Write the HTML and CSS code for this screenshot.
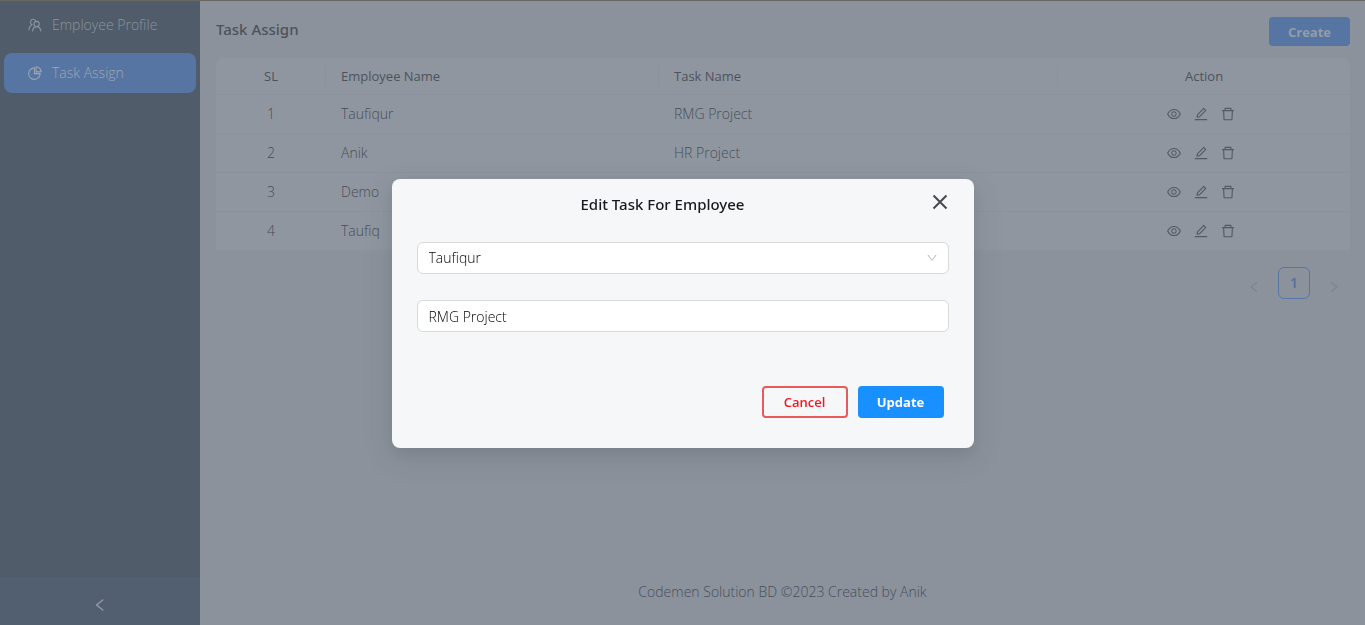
FILE: index.html
```html
<!DOCTYPE html>
<html lang="en">
<head>
<meta charset="utf-8">
<title>Task Assign</title>
<link rel="stylesheet" href="styles.css">
</head>
<body>
<svg class="defs" aria-hidden="true">
  <symbol id="eye" viewBox="0 0 1024 1024"><path d="M942.2 486.2C847.4 286.5 704.1 186 512 186c-192.2 0-335.4 100.5-430.2 300.3a60.3 60.3 0 000 51.5C176.6 737.5 319.9 838 512 838c192.2 0 335.4-100.5 430.2-300.3 7.7-16.2 7.7-35 0-51.5zM512 766c-161.3 0-279.4-81.8-362.7-254C232.6 339.8 350.7 258 512 258c161.3 0 279.4 81.8 362.7 254C791.5 684.2 673.4 766 512 766zm-4-430c-97.2 0-176 78.8-176 176s78.8 176 176 176 176-78.8 176-176-78.8-176-176-176zm0 288c-61.9 0-112-50.1-112-112s50.1-112 112-112 112 50.1 112 112-50.1 112-112 112z"/></symbol>
  <symbol id="edit" viewBox="0 0 1024 1024"><path d="M257.7 752c2 0 4-.2 6-.5L431.9 722c2-.4 3.9-1.3 5.3-2.8l423.9-423.9a9.96 9.96 0 000-14.1L694.9 114.9c-1.9-1.9-4.4-2.9-7.1-2.9s-5.2 1-7.1 2.9L256.8 538.8c-1.5 1.5-2.4 3.3-2.8 5.3l-29.5 168.2a33.5 33.5 0 009.4 29.8c6.6 6.4 14.9 9.9 23.8 9.9zm67.4-174.4L687.8 215l73.3 73.3-362.7 362.6-88.9 15.7 15.6-89zM880 836H144c-17.7 0-32 14.3-32 32v36c0 4.4 3.6 8 8 8h784c4.4 0 8-3.6 8-8v-36c0-17.7-14.3-32-32-32z"/></symbol>
  <symbol id="trash" viewBox="0 0 1024 1024"><path d="M360 184h-8c4.4 0 8-3.6 8-8v8h304v-8c0 4.4 3.6 8 8 8h-8v72h72v-80c0-35.3-28.7-64-64-64H352c-35.3 0-64 28.7-64 64v80h72v-72zm504 72H160c-17.7 0-32 14.3-32 32v32c0 4.4 3.6 8 8 8h60.4l24.7 523c1.6 34.1 29.8 61 63.9 61h454c34.2 0 62.3-26.8 63.9-61l24.7-523H888c4.4 0 8-3.6 8-8v-32c0-17.7-14.3-32-32-32zM731.3 840H292.7l-24.2-512h487l-24.2 512z"/></symbol>
  <symbol id="left" viewBox="0 0 1024 1024"><path d="M724 218.3V141c0-6.7-7.7-10.4-12.9-6.3L260.3 486.8a31.86 31.86 0 000 50.3l450.8 352.1c5.3 4.1 12.9.4 12.9-6.3v-77.3c0-4.9-2.3-9.6-6.1-12.6l-360-281 360-281.1c3.8-3 6.1-7.7 6.1-12.6z"/></symbol>
  <symbol id="right" viewBox="0 0 1024 1024"><path d="M765.7 486.8L314.9 134.7A7.97 7.97 0 00302 141v77.3c0 4.9 2.3 9.6 6.1 12.6l360 281.1-360 281.1c-3.9 3-6.1 7.7-6.1 12.6V883c0 6.7 7.7 10.4 12.9 6.3l450.8-352.1a31.96 31.96 0 000-50.4z"/></symbol>
  <symbol id="down" viewBox="0 0 1024 1024"><path d="M884 256h-75c-5.1 0-9.9 2.5-12.9 6.6L512 654.2 227.9 262.6c-3-4.1-7.8-6.6-12.9-6.6h-75c-6.5 0-10.3 7.4-6.5 12.7l352.6 486.1c12.8 17.6 39 17.6 51.7 0l352.6-486.1c3.9-5.3.1-12.7-6.4-12.7z"/></symbol>
  <symbol id="pie" viewBox="0 0 1024 1024"><path d="M864 518H506V160c0-4.4-3.6-8-8-8h-26a398.46 398.46 0 00-282.8 117.1 398.19 398.19 0 00-85.7 127.1A397.61 397.61 0 0072 552a398.46 398.46 0 00117.1 282.8c36.7 36.7 79.5 65.6 127.1 85.7A397.61 397.61 0 00472 952a398.46 398.46 0 00282.8-117.1c36.7-36.7 65.6-79.5 85.7-127.1A397.61 397.61 0 00872 552v-26c0-4.4-3.6-8-8-8zM705.7 787.8A331.59 331.59 0 01470.4 884c-88.1-.4-170.9-34.9-233.2-97.2C174.5 724.1 140 640.7 140 552c0-88.7 34.5-172.1 97.2-234.8 54.6-54.6 124.9-87.9 200.8-95.5V586h364.3c-7.7 76.3-41.3 147-96.6 201.8zM952 462.4l-2.6-28.2c-8.5-92.1-49.4-179-115.2-244.6A399.4 399.4 0 00589 74.6L560.7 72c-4.7-.4-8.7 3.2-8.7 7.9V464c0 4.4 3.6 8 8 8l384-1c4.7 0 8.4-4 8-8.6zm-332.2-58.2V147.6a332.24 332.24 0 01166.4 89.8c45.7 45.6 77 103.6 90 166.1l-256.4.7z"/></symbol>
  <symbol id="people" viewBox="0 0 16 16"><g fill="none" stroke="currentColor" stroke-width="1.1" stroke-linecap="round"><path d="M5.100 7.800A2.900 2.900 0 1 1 8.700 3.500M2 13c0-2.600 1.200-4.300 3.100-5.200"/><circle cx="9.600" cy="7" r="2.600"/><path d="M5.600 14c.2-2.500 1.800-4.400 4-4.400s3.900 1.900 4.200 4.400"/></g></symbol>
</svg>

<div class="app">
  <aside class="sidebar">
    <nav class="menu">
      <a class="menu-item" href="#profile"><svg class="icon"><use href="#people"/></svg>Employee Profile</a>
      <a class="menu-item selected" href="#tasks"><svg class="icon"><use href="#pie"/></svg>Task Assign</a>
    </nav>
    <button class="collapse" type="button" aria-label="Collapse menu"><svg class="icon"><use href="#left"/></svg></button>
  </aside>

  <div class="page">
    <main>
      <header class="page-head">
        <h1>Task Assign</h1>
        <button class="create" type="button">Create</button>
      </header>
      <table class="tasks">
        <colgroup><col class="col-sl"><col class="col-name"><col class="col-task"><col class="col-action"></colgroup>
        <thead>
          <tr><th class="center">SL</th><th>Employee Name</th><th>Task Name</th><th class="center">Action</th></tr>
        </thead>
        <tbody>
          <tr><td class="center">1</td><td>Taufiqur</td><td>RMG Project</td><td><div class="actions"><button type="button" aria-label="View"><svg class="icon"><use href="#eye"/></svg></button><button type="button" aria-label="Edit"><svg class="icon"><use href="#edit"/></svg></button><button type="button" aria-label="Delete"><svg class="icon"><use href="#trash"/></svg></button></div></td></tr>
          <tr><td class="center">2</td><td>Anik</td><td>HR Project</td><td><div class="actions"><button type="button" aria-label="View"><svg class="icon"><use href="#eye"/></svg></button><button type="button" aria-label="Edit"><svg class="icon"><use href="#edit"/></svg></button><button type="button" aria-label="Delete"><svg class="icon"><use href="#trash"/></svg></button></div></td></tr>
          <tr><td class="center">3</td><td>Demo</td><td></td><td><div class="actions"><button type="button" aria-label="View"><svg class="icon"><use href="#eye"/></svg></button><button type="button" aria-label="Edit"><svg class="icon"><use href="#edit"/></svg></button><button type="button" aria-label="Delete"><svg class="icon"><use href="#trash"/></svg></button></div></td></tr>
          <tr><td class="center">4</td><td>Taufiq</td><td></td><td><div class="actions"><button type="button" aria-label="View"><svg class="icon"><use href="#eye"/></svg></button><button type="button" aria-label="Edit"><svg class="icon"><use href="#edit"/></svg></button><button type="button" aria-label="Delete"><svg class="icon"><use href="#trash"/></svg></button></div></td></tr>
        </tbody>
      </table>
      <nav class="pagination" aria-label="Pages">
        <button class="page-arrow" type="button" aria-label="Previous page" disabled><svg class="icon"><use href="#left"/></svg></button>
        <a class="page-number" href="#page-1">1</a>
        <button class="page-arrow" type="button" aria-label="Next page" disabled><svg class="icon"><use href="#right"/></svg></button>
      </nav>
    </main>
    <footer>Codemen Solution BD ©2023 Created by Anik</footer>
  </div>
</div>

<div class="overlay">
  <form class="modal" role="dialog" aria-labelledby="modal-title">
    <h2 id="modal-title">Edit Task For Employee</h2>
    <button class="close" type="button" aria-label="Close"><svg viewBox="0 0 16 16"><path d="M1.500 1.500l13 13M14.500 1.500l-13 13"/></svg></button>
    <div class="field">
      <select aria-label="Employee"><option>Taufiqur</option><option>Anik</option><option>Demo</option><option>Taufiq</option></select>
      <svg class="chevron"><use href="#down"/></svg>
    </div>
    <div class="field"><input type="text" aria-label="Task name" value="RMG Project"></div>
    <div class="modal-actions">
      <button class="cancel" type="button">Cancel</button>
      <button class="update" type="submit">Update</button>
    </div>
  </form>
</div>
</body>
</html>
```
FILE: styles.css
```css
* { box-sizing: border-box; }

body {
  margin: 0;
  font-family: "Open Sans", "Noto Sans", sans-serif;
  font-size: 14px;
  font-weight: 300;
  line-height: 22px;
  color: #474e5a;
  background: #8b929c;
}

button, input, select { font: inherit; margin: 0; }
button { padding: 0; border: 0; background: none; color: inherit; cursor: pointer; }
a { color: inherit; text-decoration: none; }
h1, h2 { margin: 0; font-family: "Noto Sans", "Open Sans", sans-serif; font-weight: 500; }

.defs { position: absolute; width: 0; height: 0; }
.icon { display: block; width: 16px; height: 16px; fill: currentColor; }

.app { display: flex; min-height: 100vh; border-top: 1px solid #696664; }

.sidebar {
  display: flex;
  flex: 0 0 200px;
  flex-direction: column;
  justify-content: space-between;
  background: #505c69;
  color: #8c949f;
}
.menu { display: flex; flex-direction: column; gap: 8px; padding: 4px; }
.menu-item {
  display: flex;
  align-items: center;
  gap: 9px;
  height: 40px;
  padding: 0 23px;
  border-radius: 8px;
}
.menu-item.selected { background: #5675a2; color: #a0a7b1; }
.collapse {
  display: flex;
  align-items: center;
  justify-content: center;
  height: 48px;
  padding-top: 8px;
  background: #525f70;
  color: #959ca7;
}

.page { display: flex; flex: 1; flex-direction: column; justify-content: space-between; }
main { padding: 16px 15px 0 16px; }
.page-head { display: flex; justify-content: space-between; margin-bottom: 12px; }
h1 { font-size: 15px; line-height: 24px; color: #4b525c; }
.create {
  width: 81px;
  height: 29px;
  border-radius: 4px;
  background: #5675a2;
  color: #959ca7;
  font-size: 13px;
  font-weight: 700;
}

.tasks { width: 100%; table-layout: fixed; border-collapse: separate; border-spacing: 0; background: #8f969f; border-radius: 8px 8px 0 0; }
.col-sl { width: 110px; }
.col-name { width: 333px; }
.col-task { width: 35.2%; }
th, td { height: 39px; padding: 0 0 0 15px; border-bottom: 1px solid #8b929b; text-align: left; }
th {
  height: 37px;
  font-size: 13px;
  font-weight: 500;
  color: #4c535d;
  background: linear-gradient(#8b929b, #8b929b) right center / 1px 22px no-repeat;
}
th:last-child { background: none; }
th.center, td.center { padding: 0; text-align: center; }
.actions { display: flex; justify-content: center; gap: 11px; padding-right: 21px; color: #535a65; }

.pagination { display: flex; justify-content: flex-end; align-items: center; gap: 8px; margin-top: 16px; }
.page-number {
  width: 32px;
  height: 32px;
  border: 1px solid #5476a9;
  border-radius: 6px;
  color: #576da0;
  font-weight: 600;
  line-height: 30px;
  text-align: center;
}
.page-arrow { display: flex; align-items: center; justify-content: center; width: 32px; height: 32px; padding-top: 8px; color: #7c838e; }
.page-arrow .icon { width: 14px; height: 14px; }

footer { padding: 22px; text-align: center; }

.overlay { position: fixed; inset: 2px 0 0; display: flex; align-items: center; justify-content: center; }
.modal {
  position: relative;
  display: flex;
  flex-direction: column;
  gap: 26px;
  width: 582px;
  max-width: 100%;
  padding: 14px 25px 30px;
  border-radius: 8px;
  background: #f6f7f9;
  box-shadow: 0 6px 16px rgba(0, 0, 0, .08), 0 9px 28px 8px rgba(0, 0, 0, .05);
}
h2 { padding-right: 40px; font-size: 15px; line-height: 23px; color: #17191c; text-align: center; }
.close { position: absolute; top: 15px; right: 26px; width: 16px; height: 16px; }
.close svg { display: block; fill: none; stroke: #48494b; stroke-width: 2; }
.field { position: relative; }
.field input, .field select {
  display: block;
  width: 100%;
  height: 32px;
  padding: 0 11px;
  border: 1px solid #d9d9d9;
  border-radius: 6px;
  background: #fff;
  color: #000;
  appearance: none;
}
.chevron { position: absolute; top: 10px; right: 11px; width: 12px; height: 12px; fill: #bfbfbf; pointer-events: none; }
.modal-actions { display: flex; justify-content: flex-end; gap: 10px; padding: 28px 5px 0 0; }
.modal-actions button { width: 86px; height: 32px; border-radius: 4px; font-size: 13px; }
.modal-actions .cancel { border: 2px solid #ea5a5a; color: #f5161e; font-weight: 600; }
.modal-actions .update { background: #1890ff; color: #fff; font-weight: 700; }
```
